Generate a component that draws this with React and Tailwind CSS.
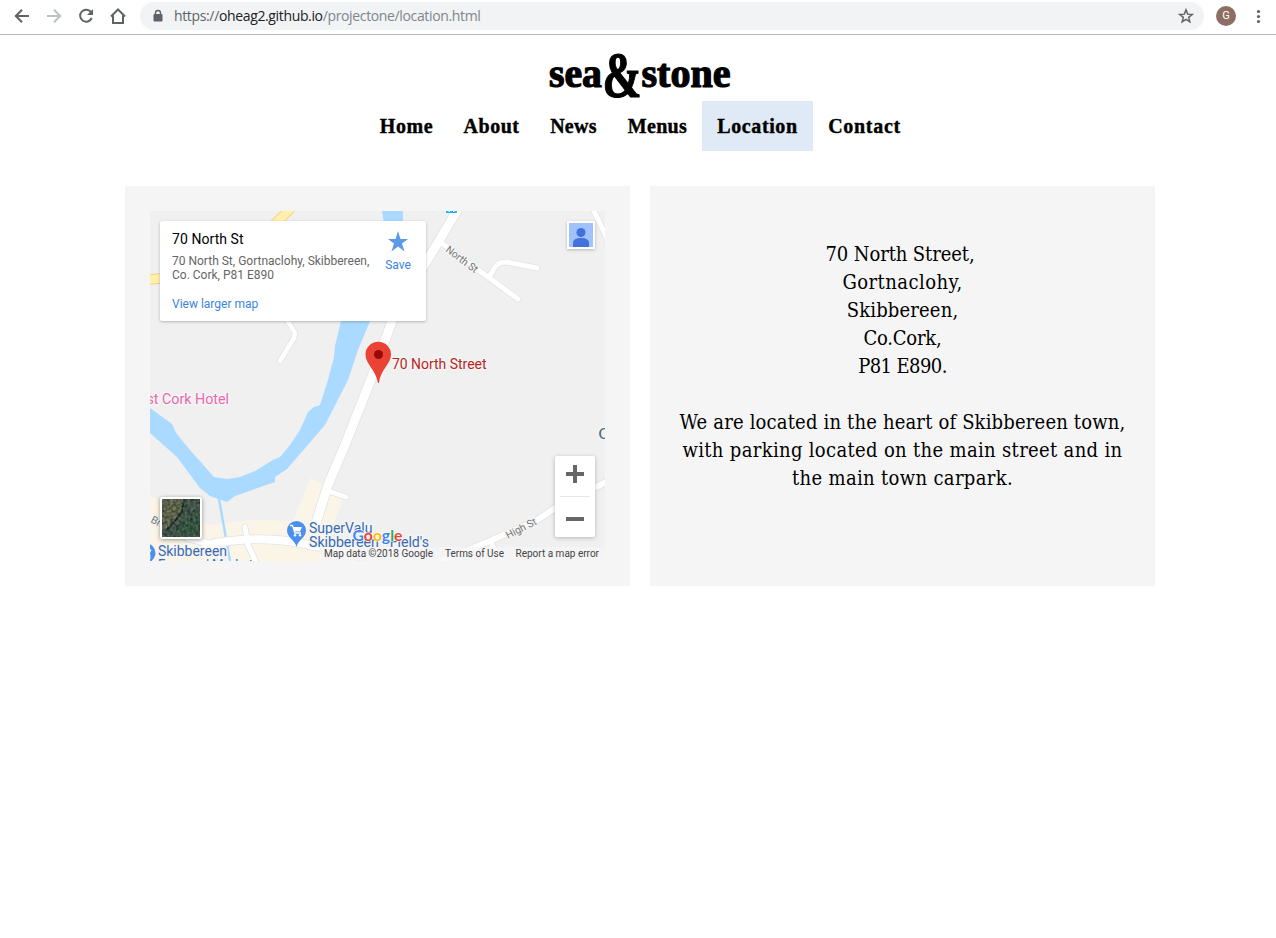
import React from 'react';

const nav = [
  ['Home', 'w-[84px] pl-px', 'tracking-[0.6px]'],
  ['About', 'w-[86px] pl-px', 'tracking-[0.5px]'],
  ['News', 'w-[78px] pl-px', 'tracking-[0.3px]'],
  ['Menus', 'w-[90px] pl-px', 'tracking-[0.3px]'],
  ['Location', 'w-[111px] bg-[#e0eaf6]', 'tracking-[0.6px]'],
  ['Contact', 'w-[103px]', 'tracking-[0.7px]'],
];

function BrowserBar() {
  return (
    <header className="flex h-[35px] items-start border-b border-[#b6b6b6] bg-white font-[Open_Sans,sans-serif]">
      <svg className="h-8 w-[140px] shrink-0" viewBox="0 0 140 32" fill="none" stroke="#5f6368" strokeWidth="2">
        <path d="M29 16H16.5M22 9.8L15.8 16L22 22.2" />
        <path d="M47 16H59.5M54 9.8L60.2 16L54 22.2" stroke="#bdc1c6" />
        <path d="M91 12.2A6 6 0 1 0 91.7 18" />
        <path d="M93 9V15H87Z" fill="#5f6368" stroke="none" />
        <path d="M111 16.5L118 9.500L125 16.5M113 15.5V23H123V15.5" strokeWidth="2" />
      </svg>
      <div className="mt-0.5 flex h-7 w-[1064px] items-center rounded-full bg-[#f1f3f4] pl-3 pr-2.5">
        <svg className="h-4 w-3" viewBox="0 0 12 16"><path d="M3.5 6.5V5a2.5 2.5 0 0 1 5 0V6.5" fill="none" stroke="#5f6368" strokeWidth="1.4" /><rect x="1.500" y="6" width="9" height="7.5" rx="1" fill="#5f6368" /></svg>
        <span className="ml-[10px] whitespace-nowrap text-sm leading-5 tracking-[-0.355px] text-[#80868b]">
          <span className="text-[#5f6368]">https://</span><span className="text-[#202124]">oheag2.github.io</span>/projectone/location.html
        </span>
        <svg className="ml-auto h-4 w-4" viewBox="0 0 24 24" fill="none" stroke="#5f6368" strokeWidth="2.200"><path d="M12 2.8l2.5 6.4 6.8.5-5.3 4.3 1.8 6.8-5.8-3.8-5.8 3.8L8 14 2.7 9.700l6.800-.5z" /></svg>
      </div>
      <div className="ml-3 mt-1.5 flex size-5 items-center justify-center rounded-full bg-[#8d6e63] font-[Roboto,sans-serif] text-[11px] text-white">G</div>
      <svg className="ml-[18px] mt-2 h-4 w-2" viewBox="0 0 8 16" fill="#5f6368"><circle cx="4.500" cy="3.500" r="1.600" /><circle cx="4.500" cy="8.500" r="1.600" /><circle cx="4.500" cy="13.500" r="1.600" /></svg>
    </header>
  );
}

const roads = [
  ['M592 207L605 234L612 250', 5],
  ['M286 318L295 333L294 338L280 361', 4.5],
  ['M440 242L518 299', 5],
  ['M489 277L495 267Q498 262 507 262L537 268', 5],
  ['M187 538L215 545L222 561', 6],
  ['M205 548L215 543Q270 534 313 546L345 550', 8],
  ['M245 527L248 545L256 562', 5],
  ['M328 491L346 497', 5],
  ['M438 562L490 541L537 520L560 505L610 480', 6],
  ['M490 541L503 564', 5],
  ['M459 207L436 246L420 272Q398 303 391 324L371 379L345 445L328 485L315 526', 9],
];

function Label({ x, y, w, size = 14, fill = '#3a6aae', children, ...rest }) {
  return (
    <text x={x} y={y} textLength={w} lengthAdjust="spacingAndGlyphs" fontSize={size} fill={fill} {...rest}>
      {children}
    </text>
  );
}

function ShopPin({ x, y }) {
  return (
    <g transform={`translate(${x} ${y})`}>
      <path d="M0 16.500C-1.500 9.500-9.500 7-9.500 0A9.500 9.500 0 0 1 9.500 0C9.500 7 1.500 9.500 0 16.500Z" fill="#4a90f0" />
      <path d="M-6.500-5h2.500L-1.500 2.500h6" fill="none" stroke="white" strokeWidth="1.300" />
      <path d="M-3.500-3.500H5.500L3.500 1H-2Z" fill="white" />
      <circle cx="-1.500" cy="4.800" r="1.200" fill="white" /><circle cx="3.500" cy="4.800" r="1.200" fill="white" />
    </g>
  );
}

function Map() {
  return (
    <div className="relative h-[350px] w-[455px] overflow-hidden bg-[#f0f0f0] font-[Roboto,sans-serif]">
      <svg className="block h-full w-full" viewBox="150 211 455 350">
        <path d="M150 495L180 514L210 525L250 520L293 521L303 497L310 478L322 484L345 496L332 527L318 549L325 561H150Z" fill="#fbf5e7" />
        <path d="M382 211H403V224L392 270L370 321L358 350L348 380L325 425L287 469L275 477V482L235 496L227 502L210 496L200 488L177 457L150 433V408L172 424L176 433L190 450L214 477L227 479L240 477L255 471L273 460L280 457L290 445L300 430L308 412L314 407L320 405L328 380L334 357L335 346L341 321L370 260L384 224Z" fill="#aadaff" />
        <path d="M219 499L230 561" stroke="#aadaff" strokeWidth="2.500" />
        <path d="M293 206L268 231M145 280L165 278" stroke="#f2d580" strokeWidth="10.500" />
        <path d="M293 206L268 231M145 280L165 278" stroke="#fff0ab" strokeWidth="8.500" />
        <g fill="none" strokeLinecap="round" strokeLinejoin="round">
          {roads.map(([d, w]) => <path key={d} d={d} stroke="#e2e2e2" strokeWidth={w + 1.5} />)}
          {roads.map(([d, w]) => <path key={d} d={d} stroke="#fff" strokeWidth={w} />)}
        </g>
        <rect x="446" y="207" width="11" height="6" rx="1" fill="#12b5f5" />
        <path d="M448.500 211.500h1.500m3 0h1.500" stroke="white" />
        <g stroke="#f5f5f5" strokeWidth="3" strokeLinejoin="round" style={{ paintOrder: 'stroke' }}>
          <Label x={445} y={251} w={37} size={10.5} fill="#777" transform="rotate(37 445 251)">North St</Label>
          <Label x={508} y={539} w={33} size={10.5} fill="#777" transform="rotate(-27 508 539)">High St</Label>
          <Label x={357} y={567} w={33} size={10.5} fill="#aaa" transform="rotate(5 357 567)">High St</Label>
          <Label x={150} y={522} w={30} size={10.5} fill="#777" transform="rotate(27 150 522)">Bridge</Label>
          <Label x={392} y={369} w={94.5} fill="#b9261d">70 North Street</Label>
          <Label x={126.500} y={404} w={102.500} fill="#ea68ac">West Cork Hotel</Label>
          <Label x={598} y={439} w={40} fill="#546e7a">Cork</Label>
          <Label x={309} y={533} w={63.500}>SuperValu</Label>
          <Label x={309} y={547} w={120}>Skibbereen - Field's</Label>
          <Label x={158} y={556} w={69}>Skibbereen</Label>
          <Label x={158} y={570} w={95}>Farmers' Market</Label>
        </g>
        <ShopPin x={296.500} y={530.500} />
        <ShopPin x={146} y={553} />
        <path d="M378 383C376 370 365.500 364 365.500 354.500A12.750 12.750 0 0 1 391 354.500C391 364 380 370 379 383Z" fill="#ea4335" />
        <circle cx="378.500" cy="354.500" r="4.500" fill="#960a0a" />
        <rect x="320" y="547" width="285" height="14" fill="#f5f5f5" opacity=".75" />
        <text x="352.500" y="541" textLength="50" fontSize="16" lengthAdjust="spacingAndGlyphs" fontWeight="bold" fontFamily="Lato, sans-serif" stroke="white" strokeWidth="1.200" style={{ paintOrder: 'stroke' }}>
          <tspan fill="#4285f4">G</tspan><tspan fill="#ea4335">o</tspan><tspan fill="#fbbc05">o</tspan><tspan fill="#4285f4">g</tspan><tspan fill="#34a853">l</tspan><tspan fill="#ea4335">e</tspan>
        </text>
        <Label x={324} y={557} w={109} size={10} fill="#444">Map data ©2018 Google</Label>
        <Label x={445} y={557} w={59} size={10} fill="#444">Terms of Use</Label>
        <Label x={515.500} y={557} w={83.500} size={10} fill="#444">Report a map error</Label>
      </svg>

      <div className="absolute left-2.5 top-2.5 flex h-[100px] w-[266px] justify-between rounded-[2px] bg-white pl-3 pr-[14px] pt-[9px] shadow-[0_1px_3px_rgba(0,0,0,0.25)]">
        <div className="w-[200px] whitespace-nowrap text-xs text-[#666]">
          <div className="text-sm leading-[18px] tracking-[0.06px] text-black">70 North St</div>
          <p className="mt-1.5 leading-[14px]">70 North St, Gortnaclohy, Skibbereen,<br />Co. Cork, P81 E890</p>
          <div className="mt-[14px] leading-[16px] text-[#3a84df]">View larger map</div>
        </div>
        <div className="flex w-7 flex-col items-center text-xs text-[#3a84df]">
          <svg className="mt-px h-[21px] w-[21px]" viewBox="0 0 21 21" fill="#5e9ae8"><path d="M10 0L12.500 8H20L14 12.500L16.500 20.500L10 15.500L3.500 20.500L6 12.500L0 8H7.500Z" /></svg>
          <span className="mt-[5px] leading-4">Save</span>
        </div>
      </div>

      <div className="absolute left-[417px] top-2.5 h-7 w-7 bg-white p-0.5 shadow-[0_1px_3px_rgba(0,0,0,0.25)]">
        <svg className="size-6" viewBox="0 0 24 24"><path d="M0 0h24v24H0z" fill="#a1c2fa" /><circle cx="12" cy="9.500" r="4.500" fill="#4272db" /><path d="M4 24v-4q0-5 8-5t8 5v4z" fill="#4272db" /></svg>
      </div>

      <div className="absolute left-[405px] top-[245px] flex h-[81px] w-10 flex-col items-center rounded-[2px] bg-white shadow-[0_1px_4px_rgba(0,0,0,0.25)]">
        <svg className="h-10 w-10" viewBox="0 0 40 40"><path d="M11 18H29M20 9V27" stroke="#666" strokeWidth="4" /></svg>
        <div className="h-px w-[30px] bg-[#e6e6e6]" />
        <svg className="h-10 w-10" viewBox="0 0 40 40"><path d="M11 22H29" stroke="#666" strokeWidth="4" /></svg>
      </div>

      <div className="absolute left-2.5 top-[286px] h-[42px] w-[42px] rounded-[2px] bg-white p-0.5 shadow-[0_1px_4px_rgba(0,0,0,0.4)]">
        <svg className="size-[38px]" viewBox="0 0 38 38">
          <filter id="terrain" colorInterpolationFilters="sRGB"><feTurbulence type="fractalNoise" baseFrequency=".35" numOctaves="3" seed="4" /><feColorMatrix values="1.1 0 0 0 -.2 1.1 0 0 0 -.17 1.1 0 0 0 -.2 0 0 0 0 .35" /></filter>
          <path d="M0 0h38v38H0z" fill="#33493d" />
          <path d="M0 0H22L18 14L8 28L0 30Z" fill="#5a6042" />
          <path d="M22 21L35 15L38 17V34L22 36L14 30Z" fill="#1f4a2f" />
          <path d="M22 0L20 12L12 23L4 32" stroke="#0c1c17" strokeWidth="2" fill="none" />
          <path d="M0 0h38v38H0z" filter="url(#terrain)" />
        </svg>
      </div>
    </div>
  );
}

const address = [
  ['70 North Street,', 'pr-[5px] tracking-[-0.1px]'],
  ['Gortnaclohy,', 'tracking-[0.45px]'],
  ['Skibbereen,', 'tracking-[0.15px]'],
  ['Co.Cork,', 'tracking-[-0.2px]'],
  ['P81 E890.', 'tracking-[-0.6px]'],
];
const directions = [
  ['We are located in the heart of Skibbereen town,', 'tracking-[0.17px]'],
  ['with parking located on the main street and in', 'tracking-[0.33px]'],
  ['the main town carpark.', 'tracking-[0.33px]'],
];

export default function App() {
  return (
    <div className="min-h-[938px] bg-white text-black">
      <BrowserBar />
      <h1 className="flex h-[66px] justify-center">
        <svg className="h-[66px] w-[200px]" viewBox="538 35 200 66" fontFamily="Liberation Serif, serif" fontWeight="bold" stroke="black" strokeWidth="1.200">
          <text x="549" y="87" fontSize="40" textLength="53" lengthAdjust="spacingAndGlyphs">sea</text>
          <text x="602.500" y="96.500" fontSize="65" textLength="39" lengthAdjust="spacingAndGlyphs">&amp;</text>
          <text x="641.500" y="87" fontSize="40" textLength="89" lengthAdjust="spacingAndGlyphs">stone</text>
        </svg>
      </h1>
      <nav className="ml-[364px] flex h-[50px] font-[Liberation_Serif,serif] text-xl font-bold [-webkit-text-stroke:0.4px_black]">
        {nav.map(([label, box, tracking]) => (
          <a key={label} className={`flex h-[50px] items-center justify-center ${box} ${tracking}`}>{label}</a>
        ))}
      </nav>
      <main className="ml-[125px] mt-[35px] flex gap-5">
        <section className="h-[400px] w-[505px] bg-[#f5f5f5] p-[25px]"><Map /></section>
        <section className="h-[400px] w-[505px] whitespace-nowrap bg-[#f5f5f5] px-[25px] pt-[54px] text-center font-[DejaVu_Serif_Condensed,DejaVu_Serif,serif] text-xl leading-7">
          <address className="not-italic">
            {address.map(([line, fit]) => <div key={line} className={fit}>{line}</div>)}
          </address>
          <p className="mt-7">
            {directions.map(([line, fit]) => <span key={line} className={`block ${fit}`}>{line}</span>)}
          </p>
        </section>
      </main>
    </div>
  );
}
